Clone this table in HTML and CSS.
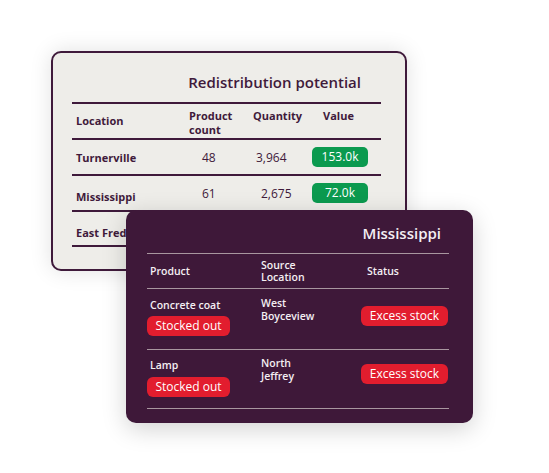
FILE: index.html
```html
<!DOCTYPE html>
<html>
<head>
<meta charset="utf-8" />
<title>Redistribution</title>
<link rel="stylesheet" href="styles.css">
</head>
<body>
<div class="stage">

<section class="card card_back">
<h2 class="back_title">Redistribution potential</h2>
<div class="back_row back_head">
<div class="c_loc mid">Location</div>
<div>Product<br />count</div>
<div>Quantity</div>
<div class="c_val">Value</div>
</div>
<div class="back_row">
<div class="c_loc">Turnerville</div>
<div class="num n_count">48</div>
<div class="num n_qty">3,964</div>
<div><span class="pill_green">153.0k</span></div>
</div>
<div class="back_row">
<div class="c_loc low">Mississippi</div>
<div class="num n_count">61</div>
<div class="num n_qty2">2,675</div>
<div><span class="pill_green">72.0k</span></div>
</div>
<div class="back_row last">
<div class="c_loc low">East Fredrickton</div>
<div class="num n_count">27</div>
<div class="num n_qty">1,208</div>
<div><span class="pill_green">41.5k</span></div>
</div>
</section><!--card_back end-->

<section class="card card_front">
<h2 class="front_title">Mississippi</h2>
<div class="front_row front_head">
<div class="c_prod">Product</div>
<div>Source<br />Location</div>
<div class="c_status">Status</div>
</div>
<div class="front_row row_a">
<div class="stack">
<span class="prod_name">Concrete coat</span>
<span class="pill_red stocked">Stocked out</span>
</div>
<div class="src">West<br />Boyceview</div>
<div><span class="pill_red excess">Excess stock</span></div>
</div>
<div class="front_row row_b">
<div class="stack">
<span class="prod_name">Lamp</span>
<span class="pill_red stocked">Stocked out</span>
</div>
<div class="src">North<br />Jeffrey</div>
<div><span class="pill_red excess">Excess stock</span></div>
</div>
</section><!--card_front end-->

</div>
</body>
</html>
```

FILE: styles.css
```css
html, body{
	margin:0;
	padding:0;
	background:#fff;
}
body{
	font-family:"Open Sans", "Liberation Sans", sans-serif;
}
.stage{
	position:relative;
	width:549px;
	height:473px;
	padding:51px 0 0 51px;
	box-sizing:border-box;
}
.card{
	box-sizing:border-box;
	border-radius:10px;
}
h2{
	margin:0;
}

/* back card */
.card_back{
	width:356px;
	height:220px;
	padding:0 24px 0 19px;
	background-color:#eeede9;
	border:2px solid #3f1a3b;
	color:#3f1a3b;
	box-shadow:0 0 22px rgba(0,0,0,0.12);
	overflow:hidden;
}
.back_title{
	padding:19px 20px 10px 0;
	line-height:20px;
	font-size:15px;
	font-weight:600;
	text-align:right;
}
.back_row{
	display:grid;
	grid-template-columns:117px 64px 59px 69px;
	align-items:center;
	height:36px;
	border-top:2px solid #3f1a3b;
	box-sizing:border-box;
	font-size:11px;
	font-weight:700;
	white-space:nowrap;
}
.back_row.last{
	height:37px;
	border-bottom:2px solid #3f1a3b;
}
.back_head{
	align-items:start;
	padding-top:5px;
	line-height:14px;
}
.back_head .mid{
	align-self:center;
	margin-top:-5px;
}
.c_loc{
	padding-left:4px;
}
.c_val{
	padding-left:11px;
}
.low{
	padding-top:7px;
}
.num{
	font-size:12px;
	font-weight:400;
}
.n_count{
	padding-left:13px;
}
.n_qty{
	padding-left:3px;
}
.n_qty2{
	padding-left:8px;
}
.pill_green{
	display:inline-block;
	width:56px;
	height:20px;
	line-height:20px;
	border-radius:5px;
	background-color:#0b9a4f;
	color:#fff;
	font-size:12px;
	font-weight:400;
	text-align:center;
}

/* front card */
.card_front{
	position:absolute;
	left:126px;
	top:210px;
	width:347px;
	height:213px;
	padding:0 24px 0 21px;
	background-color:#3e1839;
	color:#f4eff3;
	box-shadow:0 6px 24px rgba(0,0,0,0.18);
}
.front_title{
	padding:13px 8px 10px 0;
	line-height:20px;
	font-size:15px;
	font-weight:600;
	text-align:right;
}
.front_row{
	display:grid;
	grid-template-columns:114px 100px 88px;
	box-sizing:border-box;
	border-top:1.5px solid #a8969f;
	font-size:10.5px;
	font-weight:600;
	line-height:12.5px;
}
.front_head{
	height:35px;
	align-items:center;
}
.c_prod{
	padding-left:3px;
}
.c_status{
	padding-left:6px;
}
.row_a{
	height:61px;
}
.row_b{
	height:60px;
	border-bottom:1.5px solid #a8969f;
}
.stack{
	display:flex;
	flex-direction:column;
	align-items:flex-start;
	padding-top:9px;
}
.row_b .stack{
	padding-top:8px;
}
.prod_name{
	padding-left:3px;
	line-height:14px;
}
.src{
	padding-top:8px;
}
.row_b .src{
	padding-top:7px;
}
.pill_red{
	display:inline-block;
	height:20px;
	line-height:20px;
	border-radius:6px;
	background-color:#e21d2e;
	color:#fff;
	font-size:12px;
	font-weight:400;
	text-align:center;
}
.stocked{
	width:83px;
	margin-top:4px;
}
.row_b .stocked{
	margin-top:5px;
}
.excess{
	width:87px;
	margin-top:17px;
}
.row_b .excess{
	margin-top:14px;
}
```
